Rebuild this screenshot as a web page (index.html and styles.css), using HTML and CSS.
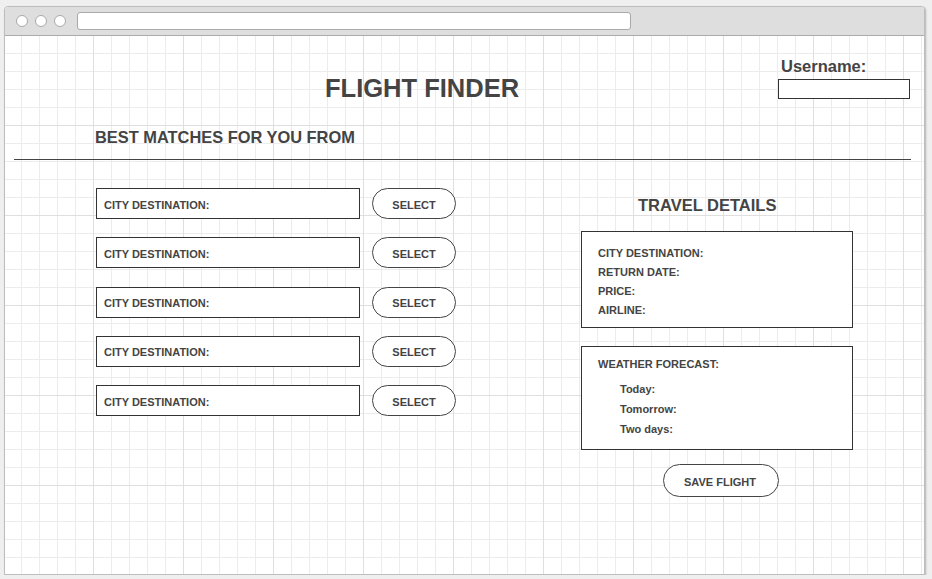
FILE: index.html
```html
<!DOCTYPE html>
<html lang="en">
<head>
<meta charset="utf-8">
<title>Flight Finder</title>
<link rel="stylesheet" href="styles.css">
</head>
<body>
<div class="window">
  <div class="titlebar">
    <span class="dot"></span><span class="dot"></span><span class="dot"></span>
    <div class="address"></div>
  </div>
  <div class="page">
    <header class="top">
      <h1 class="title">FLIGHT FINDER</h1>
      <div class="user">
        <span class="user-label">Username:</span>
        <div class="user-input"></div>
      </div>
    </header>
    <h2 class="subtitle">BEST MATCHES FOR YOU FROM</h2>
    <hr class="rule">
    <div class="main">
      <div class="matches">
        <div class="match"><div class="dest">CITY DESTINATION:</div><div class="select">SELECT</div></div>
        <div class="match"><div class="dest">CITY DESTINATION:</div><div class="select">SELECT</div></div>
        <div class="match"><div class="dest">CITY DESTINATION:</div><div class="select">SELECT</div></div>
        <div class="match"><div class="dest">CITY DESTINATION:</div><div class="select">SELECT</div></div>
        <div class="match"><div class="dest">CITY DESTINATION:</div><div class="select">SELECT</div></div>
      </div>
      <aside class="details">
        <h3 class="details-title">TRAVEL DETAILS</h3>
        <div class="card info">
          <div>CITY DESTINATION:</div>
          <div>RETURN DATE:</div>
          <div>PRICE:</div>
          <div>AIRLINE:</div>
        </div>
        <div class="card weather">
          <div class="weather-head">WEATHER FORECAST:</div>
          <div class="weather-list">
            <div>Today:</div>
            <div>Tomorrow:</div>
            <div>Two days:</div>
          </div>
        </div>
        <div class="save">SAVE FLIGHT</div>
      </aside>
    </div>
  </div>
</div>
</body>
</html>
```

FILE: styles.css
```css
* { box-sizing: border-box; }

body {
  margin: 0;
  background: #efefef;
  font-family: "Liberation Sans", Arial, sans-serif;
  color: #444;
}

.window {
  margin: 6px 0 0 4px;
  width: 921px;
  height: 569px;
  border: 1px solid #bdbdbd;
  border-radius: 4px 4px 0 0;
  background: #fff;
  box-shadow: 1px 1px 2px rgba(0, 0, 0, 0.25);
  display: flex;
  flex-direction: column;
  overflow: hidden;
}

.titlebar {
  flex: none;
  height: 29px;
  background: #dedede;
  border-bottom: 1px solid #ababab;
  display: flex;
  align-items: center;
  padding-left: 11px;
}

.dot {
  width: 12px;
  height: 12px;
  border-radius: 50%;
  background: #fff;
  border: 1px solid #a9a9a9;
  margin-right: 7px;
}

.address {
  margin-left: 4px;
  width: 554px;
  height: 18px;
  background: #fff;
  border: 1px solid #a9a9a9;
  border-radius: 3px;
}

.page {
  flex: 1;
  background-color: #fff;
  background-image:
    linear-gradient(to right, #dfdfdf 1px, transparent 1px),
    linear-gradient(to bottom, #dfdfdf 1px, transparent 1px),
    linear-gradient(to right, #ececec 1px, transparent 1px),
    linear-gradient(to bottom, #ececec 1px, transparent 1px);
  background-size: 90px 90px, 90px 90px, 18px 18px, 18px 18px;
  background-position: -2px -1px;
}

.top {
  display: flex;
  align-items: flex-start;
}

.title {
  margin: 37px 0 0 320px;
  font-size: 25.5px;
  line-height: 30px;
  font-weight: bold;
}

.user {
  margin: 21px 14px 0 auto;
  width: 132px;
}

.user-label {
  display: block;
  padding-left: 3px;
  font-size: 16.5px;
  line-height: 18px;
  font-weight: bold;
}

.user-input {
  margin-top: 4px;
  height: 20px;
  border: 1px solid #333;
  background: #fff;
}

.subtitle {
  margin: 25px 0 0 90px;
  font-size: 16.4px;
  line-height: 18px;
  font-weight: bold;
}

.rule {
  margin: 13px 13px 0 9px;
  height: 0;
  border: 0;
  border-top: 1px solid #444;
}

.main {
  display: flex;
  align-items: flex-start;
  margin-top: 28px;
  padding-left: 91px;
}

.matches {
  display: flex;
  flex-direction: column;
  gap: 18.25px;
}

.match {
  display: flex;
  gap: 12px;
}

.dest {
  width: 264px;
  height: 31px;
  border: 1px solid #333;
  background: #fff;
  display: flex;
  align-items: center;
  padding: 3px 0 0 7px;
  font-size: 11px;
  line-height: 13px;
  font-weight: bold;
}

.select {
  width: 84px;
  height: 31px;
  border: 1px solid #444;
  border-radius: 16px;
  background: #fff;
  display: flex;
  align-items: center;
  justify-content: center;
  padding-top: 3px;
  font-size: 11px;
  line-height: 13px;
  font-weight: bold;
}

.details {
  margin-left: 125px;
  width: 272px;
}

.details-title {
  margin: 8px 0 0 57px;
  font-size: 16.5px;
  line-height: 18px;
  font-weight: bold;
}

.card {
  border: 1px solid #333;
  background: #fff;
  font-size: 11px;
  font-weight: bold;
}

.info {
  margin-top: 17px;
  padding: 12px 0 7px 16px;
  line-height: 19px;
}

.weather {
  margin-top: 18px;
  padding: 8px 0 10px 16px;
}

.weather-head {
  line-height: 19px;
}

.weather-list {
  margin-top: 5px;
  padding-left: 22px;
  line-height: 20px;
}

.save {
  margin: 14px 0 0 82px;
  width: 116px;
  height: 33px;
  border: 1px solid #444;
  border-radius: 17px;
  background: #fff;
  display: flex;
  align-items: center;
  justify-content: center;
  padding-top: 3px;
  padding-right: 2px;
  font-size: 11px;
  line-height: 13px;
  font-weight: bold;
}
```
